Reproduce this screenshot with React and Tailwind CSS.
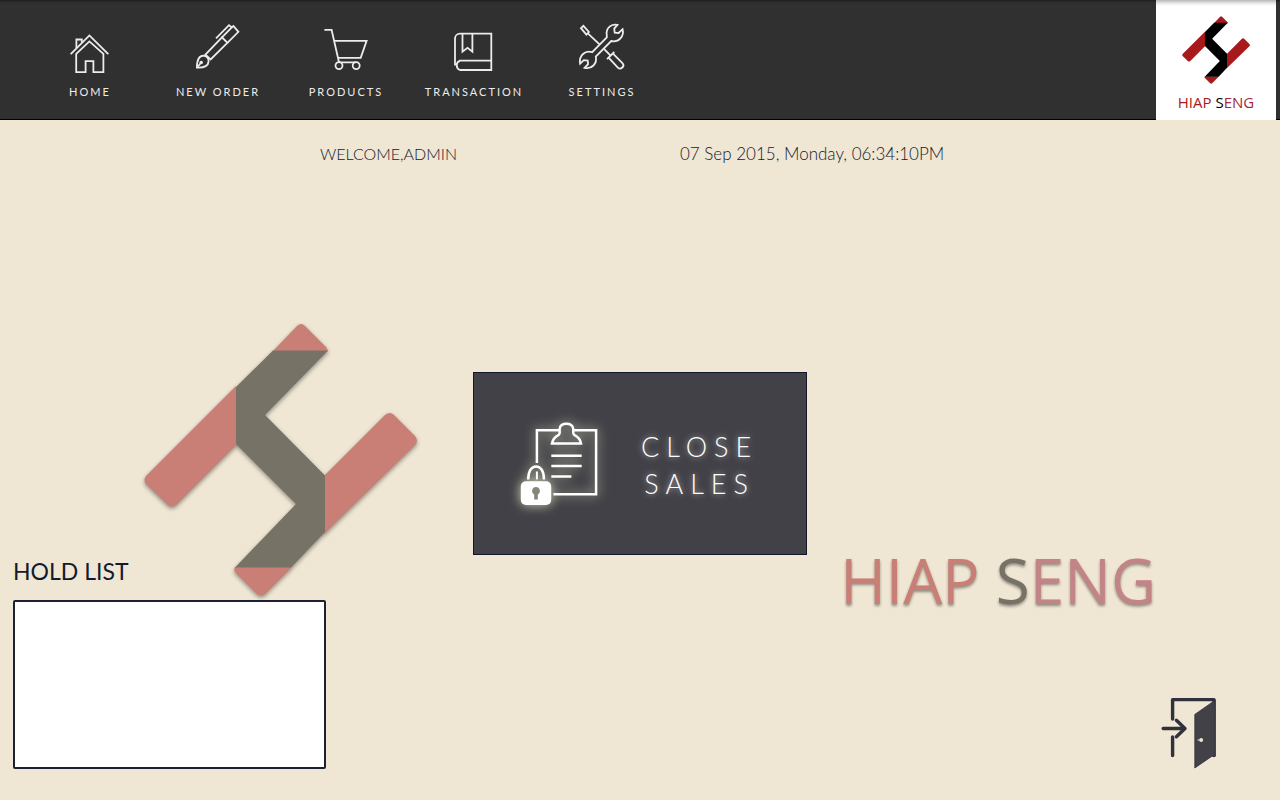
import React from "react";

function NavIcon({ children }) {
  return (
    <svg
      width="52"
      height="56"
      viewBox="0 0 52 56"
      fill="none"
      stroke="currentColor"
      strokeWidth="1.8"
      aria-hidden="true"
    >
      {children}
    </svg>
  );
}

const navItems = [
  {
    label: "HOME",
    icon: (
      <NavIcon>
        <path d="M6.7 34.2 25.4 15.4 44.3 34.2" />
        <path d="M12.2 33.8 25.4 21.4 39.4 33.8V52.2H29.4V41.2H21.6V52.2H12.2Z" />
        <path d="M12.4 28V19.5H17.8V22.6" />
      </NavIcon>
    ),
  },
  {
    label: "NEW ORDER",
    icon: (
      <NavIcon>
        <path d="M4.9 47.6C4.9 41 6.6 35.6 11.6 35.6C14.6 35.8 16.8 38.6 16.6 41.4C16.2 46 11.2 47.9 4.9 47.6Z" />
        <path d="M5 47.5 8.8 43" />
        <circle cx="9.2" cy="42.5" r="0.9" fill="currentColor" />
        <path d="M13.4 34.6 30 17.4 35.4 22.8 18.6 39.4Z" />
        <path d="M24 18.3 37 5.2 39.8 7.4 41.4 6 46.4 11.8 35.4 22.8" />
        <path d="M30 17.4 39.8 7.4" />
      </NavIcon>
    ),
  },
  {
    label: "PRODUCTS",
    icon: (
      <NavIcon>
        <path d="M4.4 9.8H11.6L19 42.3H36" />
        <path d="M14.2 20.8H46.6L40.7 37.8H18" />
        <circle cx="19" cy="45.6" r="3.5" fill="#303030" />
        <circle cx="36.2" cy="45.6" r="3.5" fill="#303030" />
      </NavIcon>
    ),
  },
  {
    label: "TRANSACTION",
    icon: (
      <NavIcon>
        <path d="M7 45.6V18.6a5 5 0 0 1 5-5H43.3V50H12a5 5 0 0 1 0-9.4H43.3" />
        <path d="M14.5 13.6V31.6L19.5 27.8 24.4 31.6V13.6" />
      </NavIcon>
    ),
  },
  {
    label: "SETTINGS",
    icon: (
      <NavIcon>
        <path d="M5 8.2 7.4 5.8 12.9 12 10.4 14.6Z" />
        <path d="M11.8 13.4 23.8 24.6M28.2 29.2 34.6 35.6" />
        <path d="M31 39.2 38.3 32" />
        <path d="M32.6 37.6 41.6 47.4C43 48.8 45 48.8 46.3 47.5C47.7 46.2 47.7 44.4 46.4 43L37 33.6" />
        <path d="M41.4 4.9C35.3 3.3 29.4 8.4 30.8 15.4V17.4L16.2 32.2C9.2 29.8 2.7 35.6 4.1 43.6L7.8 40.2L11.7 40.6L12.1 44.2L8.6 47.8C15.6 49.6 21.4 43.6 19.8 36.6L35.2 21C42.8 22.8 48.4 16.2 46.6 9.2L42.6 13L38.7 12.6L38.2 8.6Z" />
      </NavIcon>
    ),
  },
];

function LogoMark({ className }) {
  return (
    <svg viewBox="0 0 273 274" className={className} aria-hidden="true">
      <g className="fill-(--mark-red)">
        <path d="M129 28 153 3Q157-1 161 3L182 24Q185 28 183 29Z" />
        <path d="M92 63 2 153Q-1 157 2 161L24 182Q27 185 32 182L93 121Z" />
        <path d="M180 153 241 92Q246 88 250 92L271 113Q275 118 271 122L180 211Z" />
        <path d="M91 244Q89 247 92 250L113 271Q117 274 121 271L148 244Z" />
      </g>
      <path
        className="fill-(--mark-dark)"
        d="M129 27.5H184L121 92 181 152.5V209L147 244.5H91L152 181 92 121V64Z"
      />
    </svg>
  );
}

function CloseSalesIcon() {
  return (
    <svg
      width="90"
      height="92"
      viewBox="0 2 90 92"
      fill="none"
      stroke="#fff"
      strokeWidth="2.5"
      className="overflow-visible drop-shadow-[0_0_6px_#d8d8b8]"
      aria-hidden="true"
    >
      <path d="M22.9 47V14.2H45.6M59.4 14.2H82.1V78.3H39.4" />
      <path d="M38 27.4H67C66.4 23 63.6 20.6 60.2 18.8C58.4 17.8 59.6 15 59.2 12.6C58.6 9.4 56 7.8 52.4 7.8C48.8 7.8 46.2 9.4 45.7 12.6C45.3 15 46.5 17.8 44.7 18.8C41.4 20.6 38.6 23 38 27.4Z" />
      <path d="M37.3 39.8H67.7M37.3 50.1H67.7M37.3 60.4H57.4" />
      <path d="M14.2 63.4C14.2 55 17.6 50.4 22.1 50.4C26.6 50.4 30 55 30 63.4" />
      <path d="M22.9 55.5V63.4" strokeWidth="2" />
      <rect x="6.8" y="65.2" width="30.4" height="23.8" rx="5" fill="#fff" stroke="none" />
      <path
        d="M22 71A4 4 0 0 0 20.2 78.5V83.4H23.8V78.5A4 4 0 0 0 22 71Z"
        fill="#85857b"
        stroke="none"
      />
    </svg>
  );
}

function ExitIcon() {
  return (
    <svg width="58" height="74" viewBox="0 0 58 74" fill="none" stroke="#30313c" aria-hidden="true">
      <path
        d="M12.6 24V4.6H54V60.6M12.6 42V60.6"
        strokeWidth="3.4"
        strokeLinecap="round"
        strokeLinejoin="round"
      />
      <path
        d="M3.2 33.5H24M16.4 25.2 25 33.5 16.4 41.8"
        strokeWidth="3.4"
        strokeLinecap="round"
        strokeLinejoin="round"
      />
      <path d="M34.8 19.4 55.2 5.2V61.2H52L34.8 73Z" fill="#414147" strokeWidth="0.8" />
      <circle cx="41.2" cy="45" r="1.9" fill="#efe6d3" stroke="none" />
      <path d="M37.6 45H41" stroke="#efe6d3" strokeWidth="1" />
    </svg>
  );
}

export default function App() {
  return (
    <div className="flex min-h-screen flex-col bg-[#efe6d3] font-['Lato',sans-serif] text-[#141a2e]">
      <header className="flex h-[120px] justify-between border-b border-black bg-[#303030] pr-1 pl-[26px] shadow-[inset_0_4px_3px_-3px_#1a1a1a]">
        <nav className="flex" aria-label="Main">
          {navItems.map((item) => (
            <button
              key={item.label}
              type="button"
              className="flex w-32 flex-col items-center gap-2 pt-5 text-[#ececec]"
            >
              {item.icon}
              <span className="text-[11px] leading-4 tracking-[2px]">{item.label}</span>
            </button>
          ))}
        </nav>
        <div className="flex h-[120px] w-[120px] flex-col items-center gap-2 bg-white pt-4 shadow-[inset_0_6px_4px_-4px_#aaa] [--mark-dark:#000] [--mark-red:#a8191b]">
          <LogoMark className="h-[68px] w-[68px]" />
          <p className="font-['Open_Sans',sans-serif] text-[15px] leading-5 whitespace-nowrap text-[#a8191b]">
            HIAP <span className="text-black">S</span>
            <span className="text-[#a02a3c]">ENG</span>
          </p>
        </div>
      </header>

      <main className="relative flex flex-1 flex-col">
        <div className="absolute inset-x-0 top-[203px] flex items-end justify-between pr-[124px] pl-36 [--mark-dark:#777266] [--mark-red:#ca7f76]">
          <LogoMark className="h-[274px] w-[273px] overflow-visible drop-shadow-[0_2px_2px_#00000066]" />
          <p className="font-['Open_Sans',sans-serif] text-[62px] leading-[34px] font-medium whitespace-nowrap text-[#ca7f76] text-shadow-[0_2px_3px_#00000066]">
            HIAP <span className="text-[#777266]">S</span>
            <span className="text-[#c38488]">ENG</span>
          </p>
        </div>

        <div className="relative flex h-[68px] items-center pl-[25%]">
          <p className="w-[360px] text-[16px] font-light">WELCOME,ADMIN</p>
          <p className="text-[17px] font-light">07 Sep 2015, Monday, 06:34:10PM</p>
        </div>

        <div className="relative flex flex-1 items-end justify-center">
          <button
            type="button"
            className="flex h-[183px] w-[334px] items-center gap-[37px] border border-[#12162a] bg-[#414147] pl-10 text-white"
          >
            <CloseSalesIcon />
            <span className="pt-0.5 text-center text-[27px] leading-[37px] font-light tracking-[7px] text-shadow-[0_0_6px_#ffffffb0]">
              CLOSE
              <br />
              SALES
            </span>
          </button>
        </div>

        <footer className="relative flex items-end justify-between pr-[62px] pb-[31px] pl-[13px]">
          <section aria-labelledby="hold-list-title">
            <h2 id="hold-list-title" className="pb-3 text-[23px] leading-[33px]">
              HOLD LIST
            </h2>
            <div className="h-[169px] w-[313px] rounded-xs border-2 border-[#1b2034] bg-white" />
          </section>
          <button type="button" aria-label="Exit">
            <ExitIcon />
          </button>
        </footer>
      </main>
    </div>
  );
}
